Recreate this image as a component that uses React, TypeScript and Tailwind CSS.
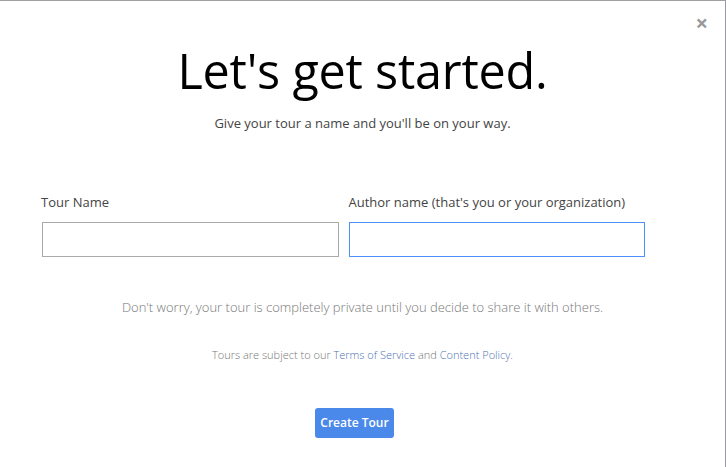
import React from "react";

const App = () => {
  return (
    <div
      className="w-[726px] h-[467px] bg-white border-t border-t-[#a0a0a0] border-r border-r-[#9a98a8] relative overflow-hidden"
      style={{ fontFamily: '"Open Sans", "Liberation Sans", sans-serif' }}
    >
      {/* Close button */}
      <button className="absolute top-[10px] right-[17px] text-[#9a9a9a] text-[22px] leading-none font-bold">
        ×
      </button>

      <div className="flex flex-col items-center pt-[37px]">
        <h1 className="text-[48.5px] leading-[64px] text-black font-normal tracking-[-0.2px]">Let's get started.</h1>
        <p className="mt-[12px] text-[13px] text-[#444]">Give your tour a name and you'll be on your way.</p>
      </div>

      {/* Form */}
      <div className="grid grid-cols-2 gap-[10px] pl-[42px] pr-[80px] mt-[59px]">
        <div className="flex flex-col">
          <label className="text-[13px] text-[#444] -ml-px">Tour Name</label>
          <input className="mt-[10px] h-[35px] border border-[#aaaaaa] outline-none px-2 text-sm" />
        </div>
        <div className="flex flex-col">
          <label className="text-[13px] text-[#444]">Author name (that's you or your organization)</label>
          <input className="mt-[10px] h-[35px] border border-[#4d90fe] outline-none px-2 text-sm" />
        </div>
      </div>

      <p className="text-center text-[13px] font-light text-[#777] mt-[41px]">
        Don't worry, your tour is completely private until you decide to share it with others.
      </p>

      <p className="text-center text-[11px] font-light text-[#777] mt-[29px]">
        Tours are subject to our <span className="text-[#4f74b4]">Terms of Service</span> and{" "}
        <span className="text-[#4f74b4]">Content Policy</span>.
      </p>

      <div className="flex justify-center pr-[16px] mt-[45px]">
        <button className="w-[79px] h-[30px] rounded-[3px] bg-[#4a89ea] text-white text-[12px] font-semibold">
          Create Tour
        </button>
      </div>
    </div>
  );
};

export default App;
